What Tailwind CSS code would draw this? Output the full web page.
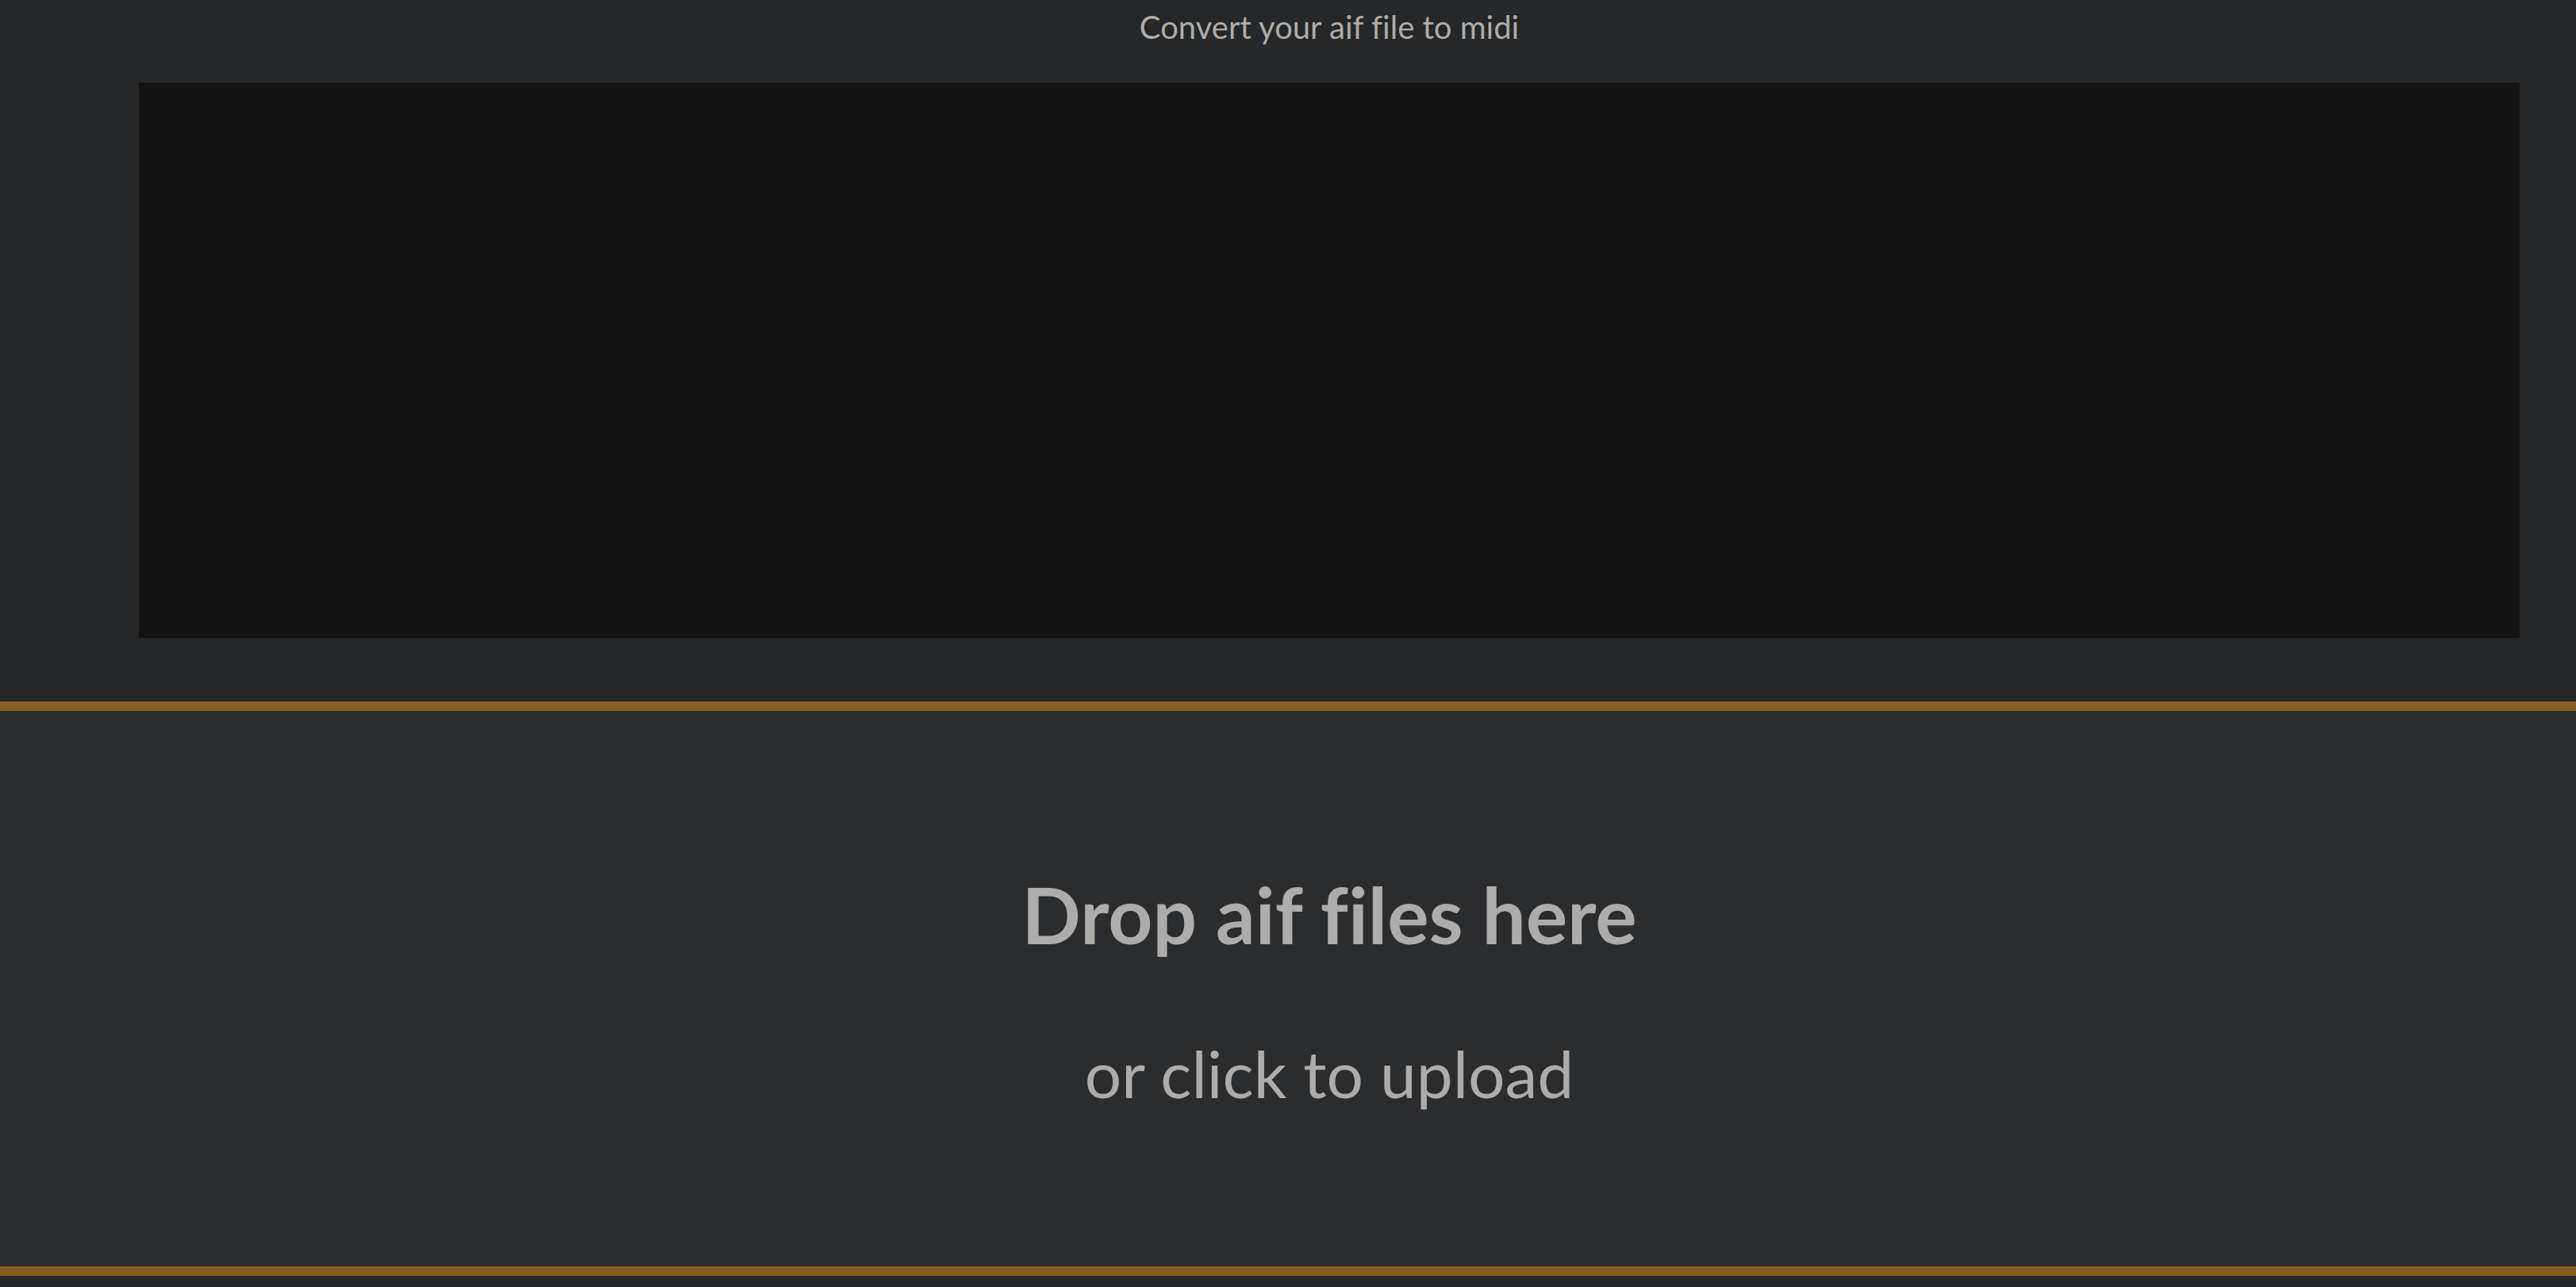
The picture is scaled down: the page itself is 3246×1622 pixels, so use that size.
<!DOCTYPE html>
<html lang="en">
<head>
<meta charset="utf-8">
<meta name="viewport" content="width=device-width, initial-scale=1">
<title>Convert your aif file to midi</title>
<script src="https://cdn.jsdelivr.net/npm/@tailwindcss/browser@4"></script>
</head>
<body class="min-h-screen bg-[#252728] font-['Lato',sans-serif] text-[#aeacaa] [font-variant-ligatures:none]">
<main class="flex flex-col">
  <section class="flex flex-col gap-10 pr-[71px] pb-20 pl-[175px]">
    <h1 class="pt-1 text-center text-[40px] leading-[60px]">Convert your aif file to midi</h1>
    <div class="h-[700px] bg-[#131313]"></div>
  </section>
  <label for="aif-files" class="flex cursor-pointer flex-col items-center gap-[72px] border-y-[12px] border-[#875e23] bg-[#2b2c2e] pt-[192px] pr-[71px] pb-[180px] pl-[175px] text-center">
    <span class="text-[98px] leading-[128px] font-bold">Drop aif files here</span>
    <span class="text-[82px] leading-[128px]">or click to upload</span>
    <input id="aif-files" type="file" accept=".aif,.aiff" multiple class="hidden">
  </label>
</main>
</body>
</html>
